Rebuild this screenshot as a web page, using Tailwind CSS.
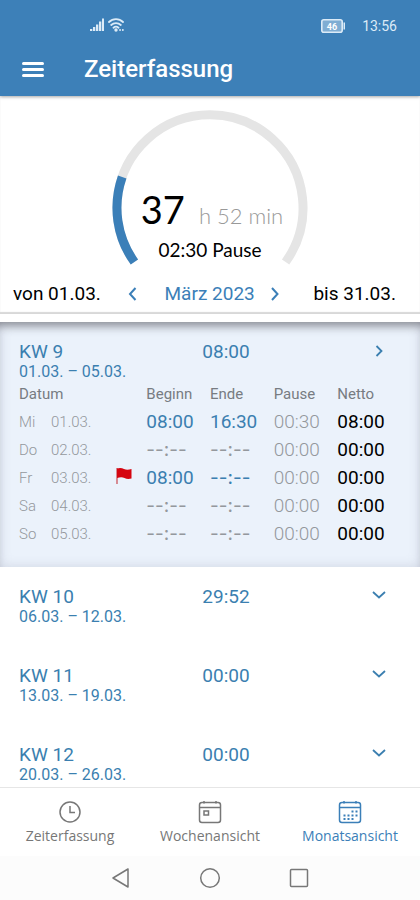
<!DOCTYPE html>
<html lang="de">

<head>
    <meta charset="utf-8">
    <meta name="viewport" content="width=device-width, initial-scale=1">
    <title>Zeiterfassung</title>
    <script src="https://cdn.jsdelivr.net/npm/@tailwindcss/browser@4"></script>
</head>

<body class="flex h-screen flex-col overflow-hidden bg-white font-['Roboto',sans-serif] text-black">
    <header class="relative z-20 bg-[#3d80b8] text-white shadow-[0_1px_3px_rgba(0,0,0,0.35)]">
      <div class="flex h-[42px] items-end justify-between pr-[23px] pl-[90px] text-[#dcebf7]">
        <div class="flex items-center gap-1 pb-2.5">
          <svg class="h-3.5 w-3.5" viewBox="0 0 14 14" fill="currentColor" aria-label="Signal">
            <rect x="0" y="11" width="2.300" height="2"/><rect x="3" y="9" width="2.300" height="4"/><rect x="6" y="6.500" width="2.300" height="6.500"/><rect x="9" y="3.500" width="2.300" height="9.500"/><rect x="12" y="0.500" width="2" height="12.500"/>
          </svg>
          <svg class="h-3.5 w-4" viewBox="0 0 16 14" fill="none" stroke="currentColor" stroke-width="1.800" stroke-linecap="round" aria-label="WLAN">
            <path d="M1 4a10 10 0 0 1 14 0M3.200 7a7 7 0 0 1 9.600 0M5.500 9.700a3.800 3.800 0 0 1 5 0"/>
            <circle cx="8" cy="12" r=".8" fill="currentColor"/><path d="M12 12h.1M14.800 12h.1"/>
          </svg>
        </div>
        <div class="flex items-center gap-4 pb-1.5">
          <svg class="h-3.5 w-[25px]" viewBox="0 0 25 14" aria-label="Akku">
            <rect x="0.800" y="0.800" width="20.400" height="12.400" rx="2" fill="#7fadd3" stroke="currentColor" stroke-width="1.600"/>
            <path d="M22.500 3.500h1.500v7h-1.500z" fill="currentColor"/>
            <text x="11" y="10.500" text-anchor="middle" font-size="9" font-weight="bold" fill="#fff">46</text>
          </svg>
          <span class="text-sm">13:56</span>
        </div>
      </div>
      <div class="flex h-[54px] items-center gap-10 px-[22px]">
        <button aria-label="Menü" class="space-y-[3px]">
          <div class="h-[3px] w-[22px] rounded bg-white"></div>
          <div class="h-[3px] w-[22px] rounded bg-white"></div>
          <div class="h-[3px] w-[22px] rounded bg-white"></div>
        </button>
        <h1 class="text-2xl font-medium">Zeiterfassung</h1>
      </div>
    </header>

    <section class="relative z-10 border-b-8 border-white bg-white pt-3.5 shadow-[inset_0_-2px_1px_#d8d8d8]">
      <div class="grid justify-items-center">
        <svg class="col-start-1 row-start-1 h-[156px] w-[196px]" viewBox="0 0 196 156" fill="none" stroke-width="9">
          <path d="M22.400 152A93 93 0 1 1 173.600 152" stroke="#e5e5e5"/>
          <path d="M22.400 152A93 93 0 0 1 10.200 67" stroke="#3b7fb8"/>
        </svg>
        <div class="col-start-1 row-start-1 flex flex-col items-center justify-end pb-1 font-['Lato',sans-serif]">
          <p class="flex items-baseline gap-3.5 pl-1">
            <span class="text-[38px] leading-10">37</span>
            <span class="text-[22px] font-light text-[#999]">h 52 min</span>
          </p>
          <p class="mt-1.5 text-[19px] leading-6">02:30 Pause</p>
        </div>
      </div>
      <div class="mt-4 flex items-center justify-between pr-6 pb-2 pl-[13px] text-[19px] leading-6">
        <span>von 01.03.</span>
        <div class="mr-2 flex items-center text-[#3b7fb8]">
          <button aria-label="Voriger Monat" class="mr-[27px]">
            <svg class="h-3.5 w-3" viewBox="0 0 12 14" fill="none" stroke="currentColor" stroke-width="2"><path d="M9.500 1L4 7L9.500 13"/></svg>
          </button>
          <span>März 2023</span>
          <button aria-label="Nächster Monat" class="ml-3.5">
            <svg class="h-3.5 w-3" viewBox="0 0 12 14" fill="none" stroke="currentColor" stroke-width="2"><path d="M3 1L8.500 7L3 13"/></svg>
          </button>
        </div>
        <span>bis 31.03.</span>
      </div>
    </section>

    <main class="flex-1 overflow-y-auto [scrollbar-width:none]">
      <section class="bg-[#ebf2fb] px-[19px] pt-[19px] pb-[19px] shadow-[inset_0_10px_10px_-6px_rgba(60,60,65,0.5),inset_0_0_12px_rgba(100,100,130,0.2)]">
        <button aria-expanded="true" class="grid w-full grid-cols-[48%_1fr_auto] items-start text-left text-[19px] leading-[22px] text-[#3b7fb0]">
          <span>KW 9<span class="block text-base leading-[18px]">01.03. – 05.03.</span></span>
          <span>08:00</span>
          <svg class="mt-0.5 mr-3.5 h-4 w-4" viewBox="0 0 16 16" fill="none" stroke="currentColor" stroke-width="1.800"><path d="M5.500 3L10.500 8L5.500 13"/></svg>
        </button>
        <table class="mt-1 w-full table-fixed text-left text-[19px]">
          <thead>
            <tr class="h-[23px] align-top text-[15px] leading-[18px] text-[#777c82]">
              <th class="w-1/3 font-normal">Datum</th>
              <th class="font-normal">Beginn</th>
              <th class="font-normal">Ende</th>
              <th class="font-normal">Pause</th>
              <th class="font-normal">Netto</th>
            </tr>
          </thead>
          <tbody class="leading-[28px] text-[#94989d]">
            <tr>
              <td class="text-[15px] font-light"><span class="inline-block w-8">Mi</span>01.03.</td>
              <td class="text-[#3b7fb0]">08:00</td>
              <td class="text-[#3b7fb0]">16:30</td>
              <td class="font-light">00:30</td>
              <td class="text-black">08:00</td>
            </tr>
            <tr>
              <td class="text-[15px] font-light"><span class="inline-block w-8">Do</span>02.03.</td>
              <td class="font-['Inter',sans-serif]">--:--</td>
              <td class="font-['Inter',sans-serif]">--:--</td>
              <td class="font-light">00:00</td>
              <td class="text-black">00:00</td>
            </tr>
            <tr>
              <td class="text-[15px] font-light">
                <div class="flex items-center justify-between pr-3.5">
                  <span><span class="inline-block w-8">Fr</span>03.03.</span>
                  <svg class="mb-1 h-4 w-4" viewBox="0 0 16 16" aria-label="Markiert"><path d="M1 0v16" stroke="#c9474f" stroke-width="1.200"/><path d="M1 0.500q4-1 7 0.500t7.500 0v9.500q-4 1-7-0.500t-7.500 0z" fill="#d50510"/></svg>
                </div>
              </td>
              <td class="text-[#3b7fb0]">08:00</td>
              <td class="font-['Inter',sans-serif] text-[#3b7fb0]">--:--</td>
              <td class="font-light">00:00</td>
              <td class="text-black">00:00</td>
            </tr>
            <tr>
              <td class="text-[15px] font-light"><span class="inline-block w-8">Sa</span>04.03.</td>
              <td class="font-['Inter',sans-serif]">--:--</td>
              <td class="font-['Inter',sans-serif]">--:--</td>
              <td class="font-light">00:00</td>
              <td class="text-black">00:00</td>
            </tr>
            <tr>
              <td class="text-[15px] font-light"><span class="inline-block w-8">So</span>05.03.</td>
              <td class="font-['Inter',sans-serif]">--:--</td>
              <td class="font-['Inter',sans-serif]">--:--</td>
              <td class="font-light">00:00</td>
              <td class="text-black">00:00</td>
            </tr>
          </tbody>
        </table>
      </section>

      <button aria-expanded="false" class="grid w-full grid-cols-[48%_1fr_auto] items-start px-[19px] pt-[19px] pb-5 text-left text-[19px] leading-[22px] text-[#3b7fb0]">
        <span>KW 10<span class="block text-base leading-[18px]">06.03. – 12.03.</span></span>
        <span>29:52</span>
        <svg class="mt-0.5 mr-3.5 h-4 w-4" viewBox="0 0 16 16" fill="none" stroke="currentColor" stroke-width="1.800"><path d="M2 4L8 9.500L14 4"/></svg>
      </button>
      <button aria-expanded="false" class="grid w-full grid-cols-[48%_1fr_auto] items-start px-[19px] pt-[19px] pb-5 text-left text-[19px] leading-[22px] text-[#3b7fb0]">
        <span>KW 11<span class="block text-base leading-[18px]">13.03. – 19.03.</span></span>
        <span>00:00</span>
        <svg class="mt-0.5 mr-3.5 h-4 w-4" viewBox="0 0 16 16" fill="none" stroke="currentColor" stroke-width="1.800"><path d="M2 4L8 9.500L14 4"/></svg>
      </button>
      <button aria-expanded="false" class="grid w-full grid-cols-[48%_1fr_auto] items-start px-[19px] pt-[19px] pb-5 text-left text-[19px] leading-[22px] text-[#3b7fb0]">
        <span>KW 12<span class="block text-base leading-[18px]">20.03. – 26.03.</span></span>
        <span>00:00</span>
        <svg class="mt-0.5 mr-3.5 h-4 w-4" viewBox="0 0 16 16" fill="none" stroke="currentColor" stroke-width="1.800"><path d="M2 4L8 9.500L14 4"/></svg>
      </button>
    </main>

    <nav class="grid grid-cols-3 border-t border-[#e6e6e6] bg-white pt-3 pb-2 text-sm leading-6 text-[#777] font-['Open_Sans',sans-serif]">
      <a href="#" class="flex flex-col items-center">
        <svg class="h-6 w-6" viewBox="0 0 24 24" fill="none" stroke="currentColor" stroke-width="1.500"><circle cx="12" cy="12" r="10"/><path d="M12 6v6.500h5"/></svg>
        Zeiterfassung
      </a>
      <a href="#" class="flex flex-col items-center">
        <svg class="h-6 w-6" viewBox="0 0 24 24" fill="none" stroke="currentColor" stroke-width="1.500"><rect x="1.500" y="2.500" width="21" height="20" rx="2.500"/><path d="M1.500 7.500h21M6 1v2.500M18 1v2.500"/><rect x="6" y="11" width="4.500" height="4"/></svg>
        Wochenansicht
      </a>
      <a href="#" aria-current="page" class="flex flex-col items-center text-[#3b7fb8]">
        <svg class="h-6 w-6" viewBox="0 0 24 24" fill="none" stroke="currentColor" stroke-width="1.500"><rect x="1.500" y="2.500" width="21" height="20" rx="2.500"/><path d="M1.500 7.500h21M6 1v2.500M18 1v2.500"/><path d="M13.500 11.500h6M5.500 15.500h14M5.500 19h10" stroke-width="2" stroke-dasharray="2 2"/></svg>
        Monatsansicht
      </a>
    </nav>

    <footer class="flex h-11 items-center justify-center gap-[67px] bg-[#fcfcfc] text-[#777]">
      <button aria-label="Zurück"><svg class="h-[22px] w-[22px]" viewBox="0 0 22 22" fill="none" stroke="currentColor" stroke-width="1.500" stroke-linejoin="round"><path d="M18 2v18L3 11z"/></svg></button>
      <button aria-label="Start"><svg class="h-[22px] w-[22px]" viewBox="0 0 22 22" fill="none" stroke="currentColor" stroke-width="1.500"><circle cx="11" cy="11" r="9.300"/></svg></button>
      <button aria-label="Übersicht"><svg class="h-[22px] w-[22px]" viewBox="0 0 22 22" fill="none" stroke="currentColor" stroke-width="1.500"><rect x="2.500" y="2.500" width="17" height="17" rx="1"/></svg></button>
    </footer>
</body>

</html>
